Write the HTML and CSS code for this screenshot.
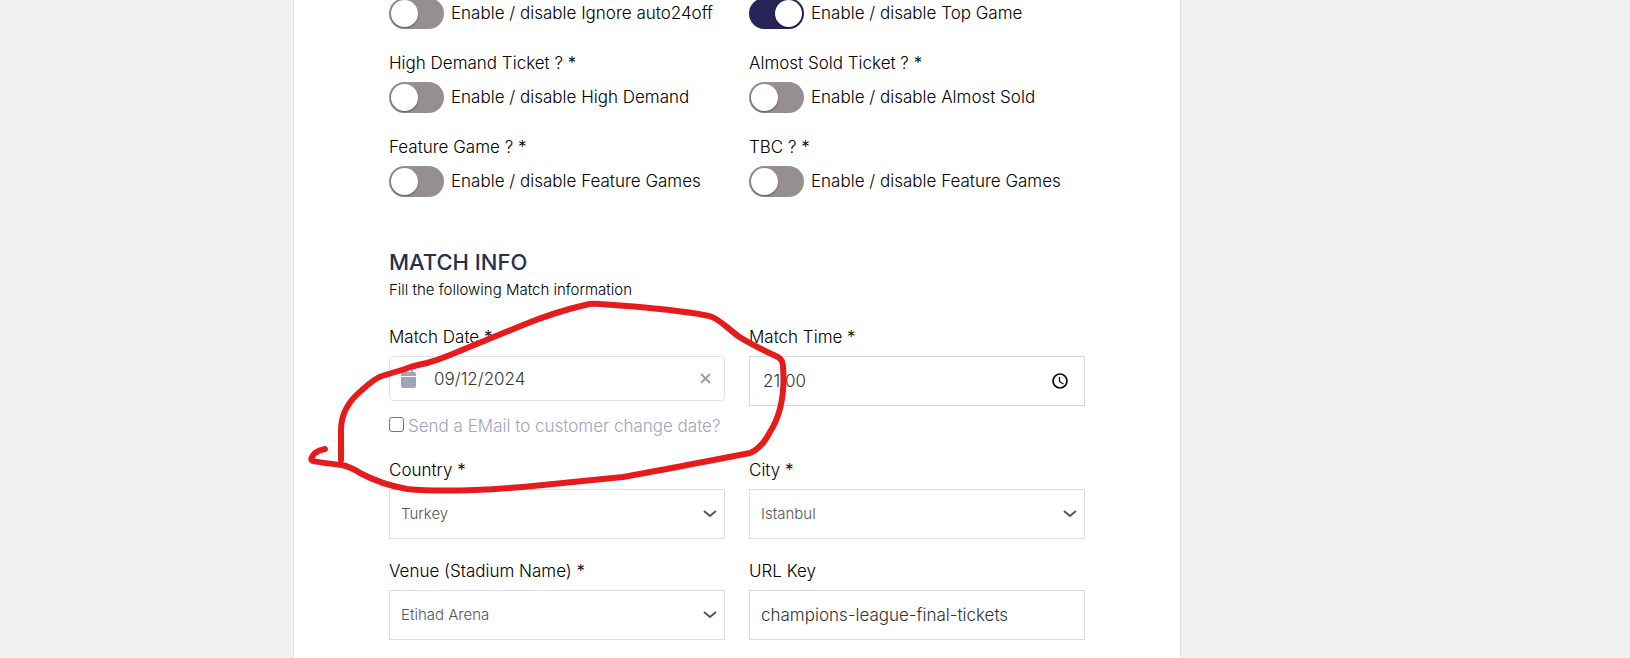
FILE: index.html
```html
<!DOCTYPE html>
<html lang="en">
<head>
<meta charset="utf-8">
<title>Edit match</title>
<link rel="stylesheet" href="styles.css">
</head>
<body>
<main class="panel">
  <form class="form">
    <section class="grid toggles">
      <label class="switch"><input type="checkbox" class="switch-input"><span>Enable / disable Ignore auto24off</span></label>
      <label class="switch"><input type="checkbox" class="switch-input" checked><span>Enable / disable Top Game</span></label>
      <div class="field">
        <span class="label">High Demand Ticket ? *</span>
        <label class="switch"><input type="checkbox" class="switch-input"><span>Enable / disable High Demand</span></label>
      </div>
      <div class="field">
        <span class="label">Almost Sold Ticket ? *</span>
        <label class="switch"><input type="checkbox" class="switch-input"><span>Enable / disable Almost Sold</span></label>
      </div>
      <div class="field">
        <span class="label">Feature Game ? *</span>
        <label class="switch"><input type="checkbox" class="switch-input"><span>Enable / disable Feature Games</span></label>
      </div>
      <div class="field">
        <span class="label">TBC ? *</span>
        <label class="switch"><input type="checkbox" class="switch-input"><span>Enable / disable Feature Games</span></label>
      </div>
    </section>

    <header class="heading">
      <h2 class="title">MATCH INFO</h2>
      <p class="subtitle">Fill the following Match information</p>
    </header>

    <section class="grid details">
      <div class="field">
        <label class="label" for="date">Match Date *</label>
        <div class="box date-box">
          <svg class="calendar" width="15" height="18" viewBox="0 0 15 18" aria-hidden="true"><path fill="#a1a3b9" d="M0 6V4q0-2 2-2h1V0h2v2h5V0h2v2h1q2 0 2 2v2zM0 7h15v9q0 2-2 2H2q-2 0-2-2z"/></svg>
          <input class="control" id="date" type="text" value="09/12/2024">
          <button class="clear" type="button" aria-label="Clear date"><svg width="11" height="11" viewBox="0 0 11 11"><path d="M1 1l9 9M10 1L1 10" stroke="#9a9cb5" stroke-width="2"/></svg></button>
        </div>
        <label class="notify"><input type="checkbox" class="check"><span>Send a EMail to customer change date?</span></label>
      </div>
      <div class="field">
        <label class="label" for="time">Match Time *</label>
        <div class="box time-box">
          <input class="control" id="time" type="text" value="21:00">
          <svg width="16" height="16" viewBox="0 0 16 16" fill="none" stroke="#111" aria-hidden="true"><circle cx="8" cy="8" r="7" stroke-width="1.700"/><path d="M7.500 4v4.500l4 2.500" stroke-width="1.300"/></svg>
        </div>
      </div>
      <div class="field">
        <label class="label" for="country">Country *</label>
        <div class="box select-box">
          <select class="select" id="country"><option>Turkey</option></select>
          <svg class="chevron" width="14" height="8" viewBox="0 0 14 8" aria-hidden="true"><path d="M1 1l6 5 6-5" fill="none" stroke="#555" stroke-width="2"/></svg>
        </div>
      </div>
      <div class="field">
        <label class="label" for="city">City *</label>
        <div class="box select-box">
          <select class="select" id="city"><option>Istanbul</option></select>
          <svg class="chevron" width="14" height="8" viewBox="0 0 14 8" aria-hidden="true"><path d="M1 1l6 5 6-5" fill="none" stroke="#555" stroke-width="2"/></svg>
        </div>
      </div>
      <div class="field">
        <label class="label" for="venue">Venue (Stadium Name) *</label>
        <div class="box select-box">
          <select class="select" id="venue"><option>Etihad Arena</option></select>
          <svg class="chevron" width="14" height="8" viewBox="0 0 14 8" aria-hidden="true"><path d="M1 1l6 5 6-5" fill="none" stroke="#555" stroke-width="2"/></svg>
        </div>
      </div>
      <div class="field">
        <label class="label" for="url">URL Key</label>
        <div class="box">
          <input class="control" id="url" type="text" value="champions-league-final-tickets">
        </div>
      </div>
    </section>
  </form>
</main>
<svg class="marker" width="500" height="210" viewBox="300 293 500 210" aria-hidden="true">
  <path d="M325 449Q319 450 315 453Q309 459 313 461Q316 462 342 465Q351 467 360 473C375 481 390 486 407 489Q448 493 523 487L623 477Q657 471 750 453Q761 449 770 432Q786 407 783 367Q783 360 778 357Q750 344 738 336C726 327 720 320 712 317C704 314 671 310 640 307L600 304Q592 303 585 305Q555 312 523 325L450 355Q438 360 427 363Q412 366 405 369L382 376Q375 378 362 390Q341 407 341 430V460"/>
</svg>
</body>
</html>
```

FILE: styles.css
```css
* { box-sizing: border-box; }

body {
  margin: 0;
  min-height: 100vh;
  display: flex;
  background: #f1f1f1;
  color: #000;
  font-family: Inter, "Open Sans", sans-serif;
  font-size: 17px;
  font-weight: 300;
  line-height: 24px;
  overflow: hidden;
}

.panel {
  flex: 1;
  margin: -2px 449px 0 293px;
  padding: 0 95px;
  background: #fff;
  border: 1px solid #e2e2e2;
  border-width: 0 1px;
}

.grid {
  display: grid;
  grid-template-columns: repeat(2, minmax(0, 1fr));
  column-gap: 24px;
}

.toggles { row-gap: 22px; }
.details { row-gap: 20px; }

.field {
  display: flex;
  flex-direction: column;
}

.label { height: 31px; }

.switch {
  display: flex;
  align-items: center;
  gap: 7px;
  height: 31px;
}

.switch span { margin-bottom: 2px; }

.switch-input {
  appearance: none;
  flex: none;
  width: 55px;
  height: 31px;
  margin: 0;
  padding: 2px;
  border-radius: 16px;
  background: #95908f;
}

.switch-input::before {
  content: "";
  display: block;
  width: 27px;
  height: 27px;
  border-radius: 50%;
  background: #fff;
  box-shadow: 0 1px 2px #0006;
}

.switch-input:checked { background: #282356; }
.switch-input:checked::before { margin-left: 24px; }

.heading { padding: 49px 0 23px; }

.title {
  margin: 0;
  color: #253053;
  font-size: 22px;
  font-weight: 500;
  line-height: 32px;
}

.subtitle {
  margin: 0;
  font-size: 15px;
}

.box {
  display: flex;
  align-items: center;
  height: 50px;
  padding: 0 11px;
  border: 1px solid #d9d9dc;
  background: #fff;
}

.control {
  flex: 1;
  min-width: 0;
  padding: 0;
  border: 0;
  outline: 0;
  background: none;
  color: #333;
  font: inherit;
}

.date-box {
  height: 45px;
  gap: 18px;
  border-radius: 4px;
  border-color: #e2e2e5;
}

.time-box { padding: 0 16px 0 13px; }

.clear {
  display: flex;
  padding: 2px;
  border: 0;
  background: none;
}

.notify {
  display: flex;
  align-items: center;
  gap: 4px;
  margin-top: 13px;
  color: #a1a3b9;
  white-space: nowrap;
}

.check {
  appearance: none;
  width: 15px;
  height: 15px;
  margin: 0 0 4px;
  border: 1px solid #767676;
  border-radius: 3px;
}

.select-box {
  display: grid;
  padding: 0;
  border-color: #dcdcec;
}

.select, .chevron { grid-area: 1 / 1; }

.select {
  appearance: none;
  width: 100%;
  height: 48px;
  padding: 0 32px 0 11px;
  border: 0;
  outline: 0;
  background: none;
  color: #555;
  font: inherit;
  font-size: 15px;
}

.chevron {
  justify-self: end;
  margin-right: 7px;
  pointer-events: none;
}

.marker {
  position: absolute;
  top: 293px;
  left: 300px;
  fill: none;
  stroke: #e61c1c;
  stroke-width: 6;
  stroke-linecap: round;
  stroke-linejoin: round;
  pointer-events: none;
}
```
